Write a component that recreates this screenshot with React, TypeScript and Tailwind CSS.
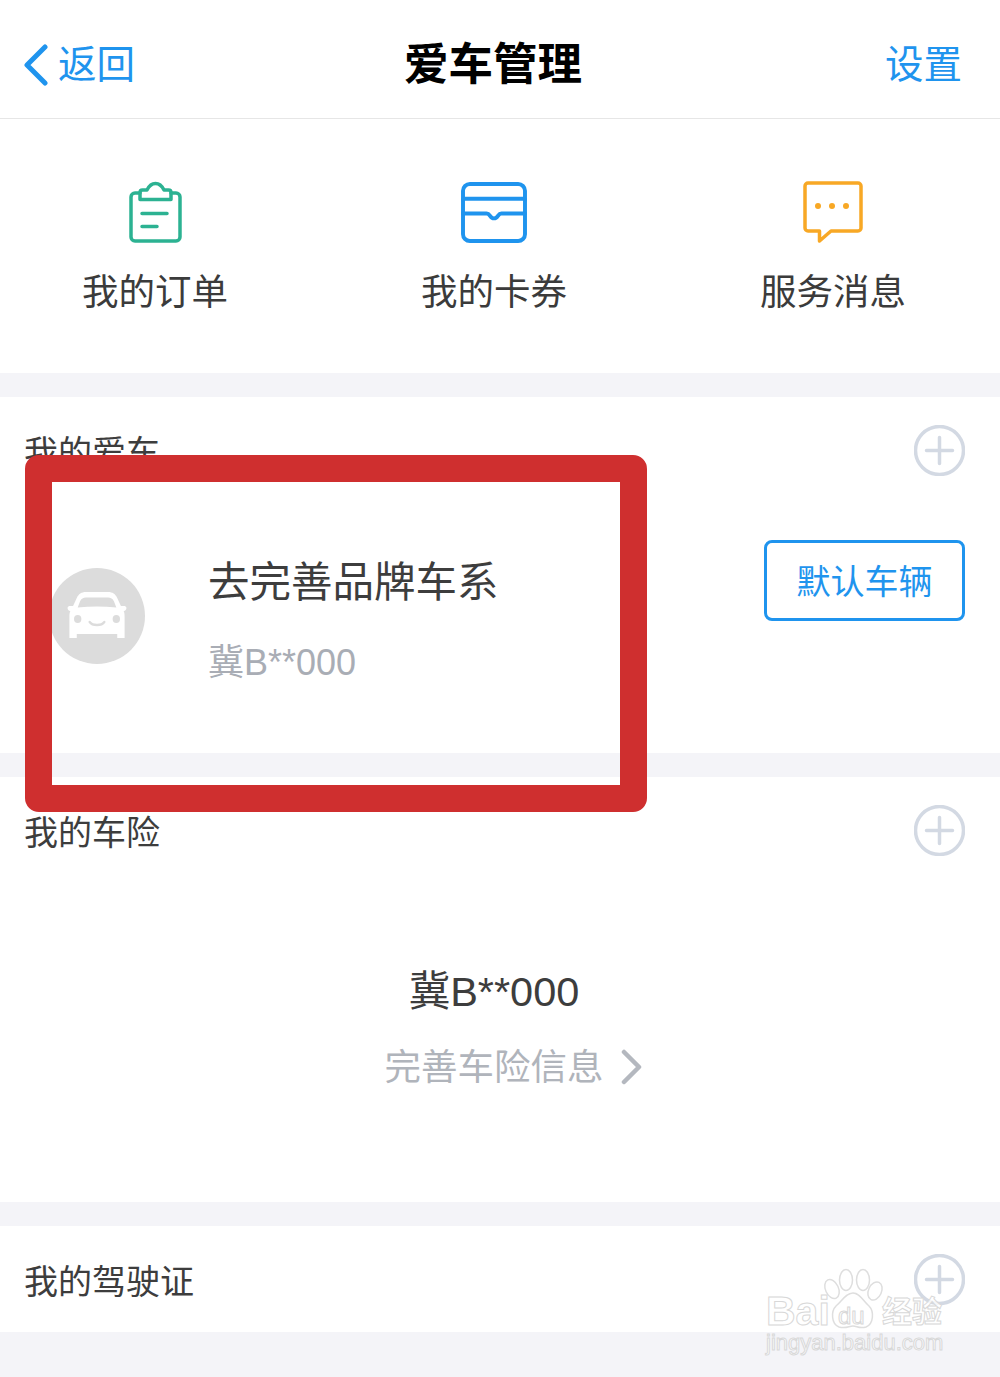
import React from "react";

const PlusCircle = () => (
  <svg width="51" height="51" viewBox="0 0 51 51" fill="none" stroke="#d3d9e3" className="shrink-0">
    <circle cx="25.5" cy="25.5" r="24" strokeWidth="3.5" />
    <path d="M12.5 25.5h26M25.5 12.5v26" strokeWidth="3.5" strokeLinecap="round" />
  </svg>
);

const ClipboardIcon = () => (
  <svg width="53" height="62" viewBox="0 0 53 62" fill="none" stroke="#2cb292" strokeWidth="3.5" strokeLinejoin="round" strokeLinecap="round">
    <path d="M11 12H6a4 4 0 0 0-4 4v40a4 4 0 0 0 4 4h41a4 4 0 0 0 4-4V16a4 4 0 0 0-4-4h-5" />
    <path d="M11 18.500V11.500c0-1.500 1-2.500 2.500-2.500H18c2-4 5-6.500 8.500-6.500s6.500 2.500 8.500 6.500h4.500c1.500 0 2.500 1 2.500 2.500v7z" />
    <path d="M13 32.500h25M13 45.500h15" />
  </svg>
);

const CardIcon = () => (
  <svg width="66" height="61" viewBox="0 0 67 62" fill="none" stroke="#1f94ee" strokeWidth="4" strokeLinejoin="round" strokeLinecap="round" className="-ml-[1px]">
    <rect x="2" y="2" width="63" height="58" rx="7" />
    <path d="M2 18q0-1 2-1h59q2 0 2 1" />
    <path d="M2 32h24c2 0 2.500 1 3.500 2.500 1 1.500 2.500 2.500 4 2.500s3-1 4-2.500 1.500-2.500 3.500-2.500h24" />
  </svg>
);

const MessageIcon = () => (
  <svg width="60" height="62" viewBox="0 0 60 62" fill="none" stroke="#f8a825" strokeWidth="3.500" strokeLinejoin="round" strokeLinecap="round">
    <path d="M5 2h50a3 3 0 0 1 3 3v42a3 3 0 0 1-3 3H28L16.500 60V50H5a3 3 0 0 1-3-3V5a3 3 0 0 1 3-3z" />
    <circle cx="15" cy="25" r="3" fill="#f8a825" stroke="none" />
    <circle cx="29" cy="25" r="3" fill="#f8a825" stroke="none" />
    <circle cx="43" cy="25" r="3" fill="#f8a825" stroke="none" />
  </svg>
);

const CarAvatar = () => (
  <svg width="96" height="96" viewBox="0 0 96 96" className="shrink-0">
    <circle cx="48" cy="48" r="48" fill="#dcdcdc" />
    <g transform="translate(48 0) scale(.92 1) translate(-48 0)">
      <path
        d="M36 24h24c5 0 8 2 10 6l4 8h4c1 0 2 1 2 2s-1 3-3 3c1 2 1 4 1 6v21h-8v-4H26v4h-8V49c0-2 0-4 1-6-2 0-3-2-3-3s1-2 2-2h4l4-8c2-4 5-6 10-6z"
        fill="#fff"
      />
      <path d="M36 29.500h24c3 0 5 1 6.500 4l2.500 6c-14-1.500-28-1.500-42 0l2.500-6c1.500-3 3.500-4 6.500-4z" fill="#dcdcdc" />
      <circle cx="27" cy="51" r="4" fill="#dcdcdc" />
      <circle cx="69" cy="51" r="4" fill="#dcdcdc" />
      <path d="M40 54c3 4 13 4 16 0" fill="none" stroke="#dcdcdc" strokeWidth="2.500" strokeLinecap="round" />
    </g>
  </svg>
);

const Shortcut = ({ icon, label }: { icon: React.ReactNode; label: string }) => (
  <div className="w-[339px] shrink-0 flex flex-col items-center">
    <div className="h-[62px] flex items-center">{icon}</div>
    <div className="mt-[27px] text-[36.500px] leading-[46px] text-[#3b3b3b]">{label}</div>
  </div>
);

const SectionTitle = ({ title }: { title: string }) => (
  <div className="flex items-center justify-between pl-6 pr-[35px]">
    <span className="pt-[4px] text-[34px] leading-[46px] text-[#3d3d3d]">{title}</span>
    <PlusCircle />
  </div>
);

const Watermark = () => (
  <div className="absolute left-[766px] top-[1268px] w-[190px] h-[90px] pointer-events-none">
    <svg width="70" height="66" viewBox="0 0 70 66" fill="#fff" stroke="#dedede" strokeWidth="1.500" className="absolute left-[56px] top-0">
      <ellipse cx="10" cy="21" rx="6.500" ry="10" transform="rotate(-25 10 21)" />
      <ellipse cx="24" cy="12" rx="6.500" ry="10.500" />
      <ellipse cx="41" cy="12" rx="6.500" ry="10.500" />
      <ellipse cx="53" cy="23" rx="6.500" ry="9.500" transform="rotate(25 53 23)" />
      <path d="M31 25c7 0 10 8 16 13 5 5 5 18-3 21-7 2-9-1-13-1s-7 3-14 1c-8-3-8-16-3-21 6-5 10-13 17-13z" />
    </svg>
    <span className="absolute left-0 top-[20px] text-[41px] leading-[46px] font-bold text-[#ffffffcc] [-webkit-text-stroke:1px_#d8d8d8] font-['Liberation_Sans',sans-serif]">Bai</span>
    <span className="absolute left-[72px] top-[33px] text-[24px] leading-[30px] text-[#ffffffcc] [-webkit-text-stroke:1px_#d8d8d8]">du</span>
    <span className="absolute left-[116px] top-[24px] text-[30px] leading-[40px] font-bold text-[#ffffffcc] [-webkit-text-stroke:1px_#d8d8d8]">经验</span>
    <span className="absolute left-0 top-[62px] text-[22px] leading-[26px] text-[#ffffffcc] [-webkit-text-stroke:1px_#d8d8d8]">jingyan.baidu.com</span>
  </div>
);

export default function App() {
  return (
    <div className="relative w-[1000px] h-[1377px] overflow-hidden bg-[#f4f4f8] font-['Liberation_Sans','Noto_Sans_CJK_SC',sans-serif]">
      <header className="h-[119px] bg-white border-b border-[#e6e6e6] flex items-center justify-between pl-6 pr-[38px] pt-3">
        <div className="flex items-center text-[#1f94ee] w-[300px]">
          <svg width="24" height="42" viewBox="0 0 24 42" fill="none" stroke="#1f94ee" strokeWidth="5" strokeLinecap="round" strokeLinejoin="round">
            <path d="M21 3L3 21l18 18" />
          </svg>
          <span className="ml-[10px] text-[38.500px] leading-[46px]">返回</span>
        </div>
        <h1 className="text-[44.500px] leading-[54px] font-bold text-black">爱车管理</h1>
        <div className="w-[300px] text-right text-[38.500px] leading-[46px] text-[#1f94ee]">设置</div>
      </header>

      <section className="h-[254px] bg-white flex justify-center pr-3 pt-[62px]">
        <Shortcut icon={<ClipboardIcon />} label="我的订单" />
        <Shortcut icon={<CardIcon />} label="我的卡券" />
        <Shortcut icon={<MessageIcon />} label="服务消息" />
      </section>

      <section className="mt-6 h-[356px] bg-white pt-7">
        <SectionTitle title="我的爱车" />
        <div className="flex items-start justify-between pl-[49px] pr-[35px]">
          <div className="flex items-start mt-[92px]">
            <CarAvatar />
            <div className="ml-[63px] -mt-[11px]">
              <div className="text-[41.500px] leading-[52px] text-[#3d3d3d]">去完善品牌车系</div>
              <div className="mt-[31px] text-[36px] leading-[46px] text-[#a9adb5]">冀B**000</div>
            </div>
          </div>
          <button className="mt-[64px] w-[201px] h-[81px] pt-1 rounded-[8px] border-[3px] border-[#1f94ee] bg-white text-[34px] text-[#1f94ee]">
            默认车辆
          </button>
        </div>
      </section>

      <section className="mt-6 h-[425px] bg-white pt-7">
        <SectionTitle title="我的车险" />
        <div className="mt-[109px] flex flex-col items-center pr-3">
          <div className="text-[41.500px] leading-[54px] text-[#3d3d3d]">冀B**000</div>
          <div className="mt-[26px] flex items-center text-[36.500px] leading-[46px] text-[#b0b4bb]">
            完善车险信息
            <svg width="22" height="36" viewBox="0 0 22 36" fill="none" stroke="#b4b8bf" strokeWidth="4.500" strokeLinecap="round" strokeLinejoin="round" className="ml-[16px] -mr-[38px] -mt-[3px]">
              <path d="M4 3l15 15L4 33" />
            </svg>
          </div>
        </div>
      </section>

      <section className="mt-6 h-[106px] bg-white pt-7">
        <SectionTitle title="我的驾驶证" />
      </section>

      {/* red annotation drawn over the shot */}
      <div className="absolute left-[25px] top-[455px] w-[622px] h-[357px] border-[27px] border-[#cf2f2f] rounded-[14px] pointer-events-none" />
      <Watermark />
    </div>
  );
}
